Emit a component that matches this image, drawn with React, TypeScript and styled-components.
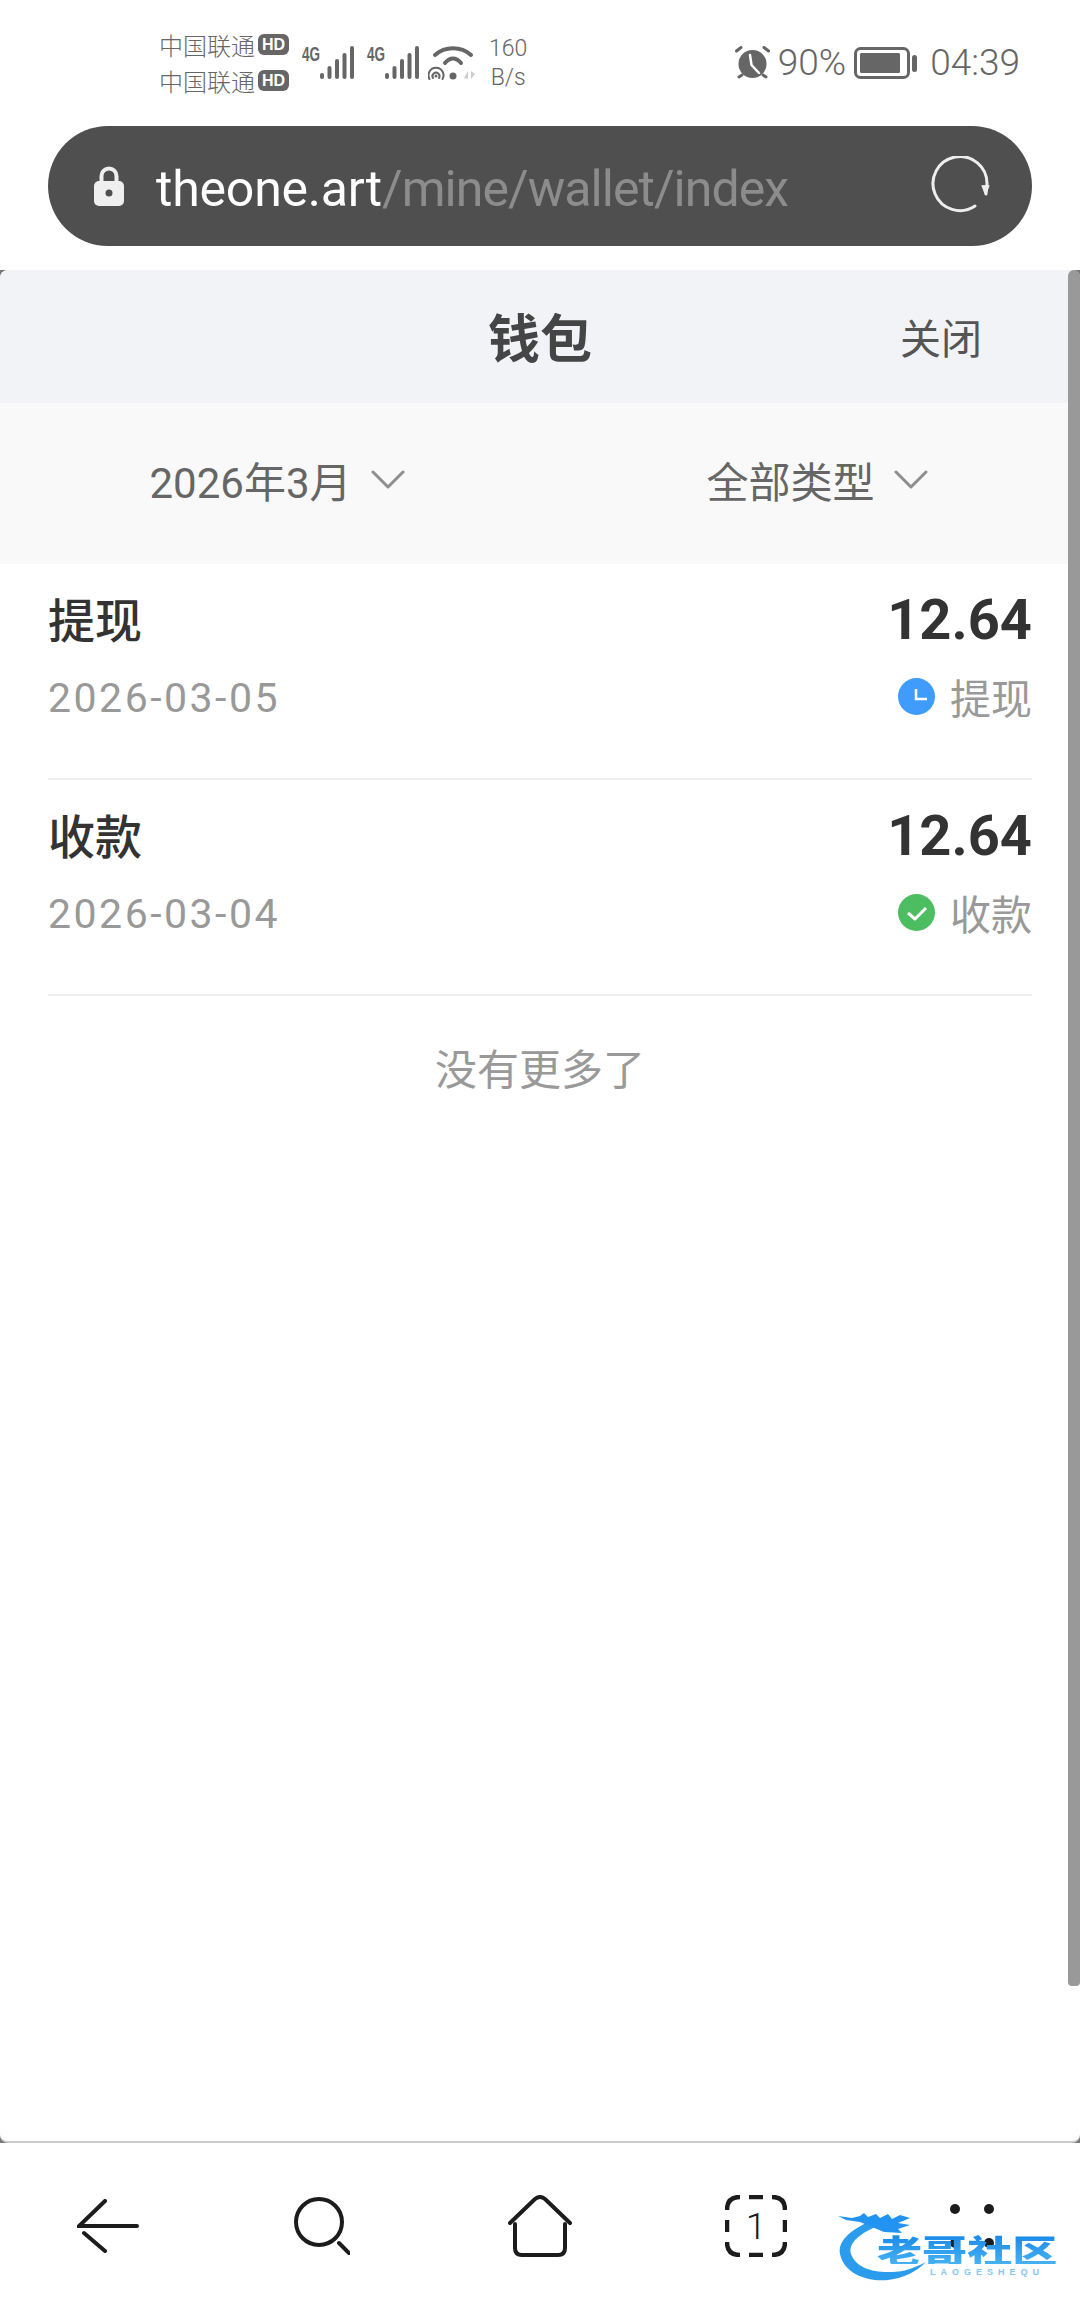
import React from 'react';
import styled, { createGlobalStyle } from 'styled-components';

const GlobalStyle = createGlobalStyle`
  html, body {
    margin: 0;
    padding: 0;
    background: #fff;
  }
  body {
    font-family: Roboto, "Noto Sans CJK SC", sans-serif;
  }
`;

const Page = styled.div`
  position: relative;
  width: 1080px;
  height: 2310px;
  display: flex;
  flex-direction: column;
  overflow: hidden;
  background: #fff;
`;

const StatusBar = styled.div`
  height: 126px;
  box-sizing: border-box;
  padding: 0 60px 1px 159px;
  display: flex;
  align-items: center;
  justify-content: space-between;
  color: #666;
`;

const StatusGroup = styled.div`
  display: flex;
  align-items: center;
`;

const Carriers = styled.div`
  display: flex;
  flex-direction: column;
  gap: 8px;
  margin-right: 13px;
`;

const Carrier = styled.div`
  display: flex;
  align-items: center;
  gap: 3px;
  font-size: 24px;
  line-height: 28px;
  font-family: "Noto Sans CJK SC", sans-serif;
  font-weight: 300;
`;

const HdBadge = styled.span`
  width: 31px;
  height: 21px;
  border-radius: 6px;
  background: #666;
  color: #fff;
  font: 700 16px/21px "Liberation Sans", sans-serif;
  text-align: center;
`;

const SignalGroup = styled.div`
  display: flex;
  gap: 12px;
  margin-right: 8px;
`;

const Speed = styled.div`
  margin-left: 13px;
  font-size: 23px;
  font-weight: 300;
  line-height: 29px;
  text-align: center;
`;

const BatteryText = styled.span`
  font-size: 37px;
  font-weight: 300;
  margin: 0 8px 0 8px;
`;

const ClockText = styled.span`
  font-size: 37px;
  font-weight: 300;
  margin-left: 13px;
`;

const UrlBar = styled.div`
  height: 120px;
  margin: 0 48px;
  box-sizing: border-box;
  padding: 0 42px 0 45px;
  display: flex;
  align-items: center;
  border-radius: 60px / 60px;
  background: #4f4f4f;
`;

const UrlText = styled.div`
  flex: 1;
  margin-left: 31px;
  padding-top: 5px;
  font-size: 50px;
  font-weight: 400;
  letter-spacing: -0.95px;
  color: #8c8c8c;
  white-space: nowrap;
`;

const UrlHost = styled.span`
  color: #fff;
  letter-spacing: -0.2px;
`;

const WebFrame = styled.div`
  margin-top: 24px;
  height: 1873px;
  display: flex;
  flex-direction: column;
  position: relative;
  background: #777;
`;

const WebContent = styled.div`
  flex: 1;
  display: flex;
  flex-direction: column;
  border-radius: 8px;
  overflow: hidden;
  background: #fff;
  border-bottom: 2px solid #ccc;
`;

const Header = styled.div`
  height: 133px;
  flex: none;
  padding-bottom: 2px;
  box-sizing: border-box;
  background: #f2f3f7;
  position: relative;
  display: flex;
  align-items: center;
  justify-content: center;
`;

const Title = styled.div`
  font-family: "Noto Sans CJK SC", sans-serif;
  font-size: 52px;
  font-weight: 700;
  color: #454545;
`;

const CloseLink = styled.div`
  position: absolute;
  right: 98px;
  top: 50%;
  transform: translateY(-52%);
  font-family: "Noto Sans CJK SC", sans-serif;
  font-size: 41px;
  color: #555;
`;

const FilterBar = styled.div`
  height: 161px;
  flex: none;
  background: #f9f9f9;
  display: grid;
  grid-template-columns: 554px 526px;
`;

const Filter = styled.div`
  display: flex;
  align-items: center;
  justify-content: center;
  gap: 19px;
  padding-bottom: 8px;
  font-size: 42px;
  color: #666;
  font-family: Roboto, "Noto Sans CJK SC", sans-serif;
`;

const List = styled.div`
  display: flex;
  flex-direction: column;
  padding: 0 48px;
`;

const Row = styled.div`
  height: 216px;
  box-sizing: border-box;
  border-bottom: 2px solid #eee;
  display: grid;
  grid-template-columns: 1fr auto;
  grid-template-rows: 78px 77px;
  padding-top: 17px;
  align-items: center;
`;

const RowTitle = styled.div`
  margin-bottom: 6px;
  font-family: "Noto Sans CJK SC", sans-serif;
  font-size: 47px;
  color: #333;
  font-weight: 500;
`;

const Amount = styled.div`
  font-family: Roboto, sans-serif;
  font-size: 56px;
  font-weight: 700;
  color: #333;
  text-align: right;
`;

const RowDate = styled.div`
  font-size: 41px;
  color: #999;
  letter-spacing: 2.5px;
`;

const RowStatus = styled.div`
  display: flex;
  align-items: center;
  justify-content: flex-end;
  gap: 15px;
  margin-bottom: 3px;
  font-family: "Noto Sans CJK SC", sans-serif;
  font-size: 41px;
  color: #999;
`;

const NoMore = styled.div`
  margin-top: 43px;
  text-align: center;
  font-family: "Noto Sans CJK SC", sans-serif;
  font-size: 42px;
  line-height: 56px;
  color: #999;
`;

const ScrollThumb = styled.div`
  position: absolute;
  top: 0;
  right: 0;
  width: 12px;
  height: 1716px;
  border-radius: 6px 6px 4px 4px;
  background: #999;
`;

const BottomNav = styled.div`
  flex: 1;
  display: grid;
  grid-template-columns: repeat(5, 1fr);
  align-items: center;
  justify-items: center;
  padding-bottom: 2px;
`;

const SearchSlot = styled.span`
  display: flex;
  margin-right: 4px;
`;

const Watermark = styled.div`
  position: absolute;
  left: 838px;
  top: 2212px;
  width: 224px;
  height: 70px;
`;

const WatermarkTitle = styled.div`
  position: absolute;
  left: 39px;
  top: 22px;
  font-family: "Noto Sans CJK SC", sans-serif;
  font-size: 32px;
  line-height: 30px;
  font-weight: 900;
  white-space: nowrap;
  transform: scaleX(1.41);
  transform-origin: left center;
  background: linear-gradient(#1788e8, #46b2f3);
  -webkit-background-clip: text;
  background-clip: text;
  color: transparent;
`;

const WatermarkSub = styled.div`
  position: absolute;
  left: 92px;
  top: 55px;
  font: 700 9px/10px "Liberation Sans", sans-serif;
  letter-spacing: 5px;
  color: #86c6f0;
  white-space: nowrap;
`;

const Chevron = () => (
  <svg width="34" height="20" viewBox="0 0 34 20" fill="none" stroke="#8e8e8e" strokeWidth="3" strokeLinecap="round" strokeLinejoin="round">
    <path d="M2 2 L17 17 L32 2" />
  </svg>
);

const Signal = () => (
  <svg width="53" height="39" viewBox="0 -3 53 39" fill="#666">
    <text x="0" y="15" fontFamily="'Liberation Sans', sans-serif" fontSize="20" fontWeight="700" textLength="18" lengthAdjust="spacingAndGlyphs">4G</text>
    <rect x="18" y="27" width="4" height="6" rx="2" />
    <rect x="25.5" y="20" width="4" height="13" rx="2" />
    <rect x="33" y="13" width="4" height="20" rx="2" />
    <rect x="40.5" y="7" width="4" height="26" rx="2" />
    <rect x="48" y="0" width="4" height="33" rx="2" />
  </svg>
);

const Wifi = () => (
  <svg width="48" height="34" viewBox="0 0 48 34" fill="none" stroke="#666" strokeLinecap="round">
    <path d="M7 9 C17 0 33 0 43 9" strokeWidth="4" />
    <path d="M17 17 C22 11 28 11 33 17" strokeWidth="4" />
    <path d="M1.5 33 A7.5 7.5 0 1 1 14.5 33" strokeWidth="2" />
    <path d="M5 32 A3.5 3.5 0 1 1 11 32" strokeWidth="2" />
    <circle cx="8" cy="30" r="1.5" fill="#666" stroke="none" />
    <circle cx="25" cy="30" r="3.5" fill="#666" stroke="none" />
    <path d="M40 33 L40 25 L36 32 Z M43 25 L43 33 L47 28 Z" fill="#ccc" stroke="none" />
  </svg>
);

const Alarm = () => (
  <svg width="35" height="33" viewBox="0 0 35 33" fill="none" stroke="#666" strokeLinecap="round">
    <circle cx="17.5" cy="18" r="14" fill="#666" stroke="none" />
    <path d="M1.5 5 L6 1.5 M33.5 5 L29 1.5 M4 31 L7 29 M31 31 L28 29" strokeWidth="3" />
    <path d="M15 9 L16.5 19 L24 27" stroke="#fff" strokeWidth="2.5" />
  </svg>
);

const Battery = () => (
  <svg width="63" height="32" viewBox="0 0 63 32" fill="none">
    <rect x="1.5" y="1.5" width="53" height="29" rx="5" stroke="#666" strokeWidth="3" />
    <rect x="6" y="6" width="40" height="20" rx="1.5" fill="#666" />
    <rect x="58" y="8" width="5" height="17" rx="2.5" fill="#666" />
  </svg>
);

const Lock = () => (
  <svg width="32" height="40" viewBox="0 0 32 40" fill="none">
    <path d="M8.5 17 V10 A7.5 7.5 0 0 1 23.5 10 V17" stroke="#efefef" strokeWidth="4" />
    <rect x="1" y="15" width="30" height="25" rx="5" fill="#efefef" />
    <circle cx="16" cy="27" r="3.5" fill="#4f4f4f" />
  </svg>
);

const Reload = () => (
  <svg width="60" height="60" viewBox="0 0 60 60" fill="none" stroke="#eee" strokeWidth="3" strokeLinecap="round">
    <path d="M45 50 A27 27 0 1 1 57 28 L56 38" />
    <path d="M52 30 L55.5 39 L59 30 Z" fill="#eee" strokeWidth="1" />
  </svg>
);

const ClockBadge = () => (
  <svg width="37" height="37" viewBox="0 0 37 37" fill="none">
    <circle cx="18.5" cy="18.5" r="18.5" fill="#3f9bfc" />
    <path d="M18 11 V21 H29" stroke="#fff" strokeWidth="2.5" />
  </svg>
);

const CheckBadge = () => (
  <svg width="37" height="37" viewBox="0 0 37 37" fill="none">
    <circle cx="18.5" cy="18.5" r="18.5" fill="#4dbd61" />
    <path d="M10 19 L17 25 L28 14" stroke="#fff" strokeWidth="3" strokeLinejoin="round" />
  </svg>
);

const BackIcon = () => (
  <svg width="62" height="54" viewBox="0 0 62 54" fill="none" stroke="#1c1c1c" strokeWidth="4" strokeLinecap="round">
    <path d="M28 2 L2 27 H60" />
    <path d="M7 34 L28 52" />
  </svg>
);

const SearchIcon = () => (
  <svg width="56" height="58" viewBox="0 0 56 58" fill="none" stroke="#1c1c1c" strokeWidth="4" strokeLinecap="round">
    <circle cx="25" cy="25" r="23" />
    <path d="M45 46 L55 56" />
  </svg>
);

const HomeIcon = () => (
  <svg width="64" height="62" viewBox="0 0 64 62" fill="none" stroke="#1c1c1c" strokeWidth="4" strokeLinecap="round" strokeLinejoin="round">
    <path d="M2 28 L27 4 Q32 0 37 4 L62 28" />
    <path d="M7 29 V53 Q7 60 14 60 H50 Q57 60 57 53 V29" />
  </svg>
);

const TabsIcon = () => (
  <svg width="62" height="62" viewBox="0 0 62 62" fill="none" stroke="#1c1c1c" strokeWidth="4.5">
    <path d="M2 15 Q2 2 15 2 M24 2 H38 M47 2 Q60 2 60 15 M60 25 V37 M60 47 Q60 60 47 60 M38 60 H24 M15 60 Q2 60 2 47 M2 37 V25" />
    <text x="31" y="44" textAnchor="middle" fontFamily="Roboto, sans-serif" fontSize="37" fontWeight="300" fill="#1c1c1c" stroke="none">1</text>
  </svg>
);

const MenuIcon = () => (
  <svg width="44" height="44" viewBox="0 0 44 44" fill="#1c1c1c">
    <circle cx="5" cy="5" r="5" />
    <circle cx="39" cy="5" r="5" />
    <circle cx="5" cy="39" r="5" />
    <circle cx="39" cy="39" r="5" />
  </svg>
);

const DragonMark = () => (
  <svg width="100" height="70" viewBox="0 0 100 70" fill="none">
    <path d="M28 11 C10 20 0 30 2 42 C6 62 30 70 50 68 C66 66 78 60 88 50 C76 56 66 60 54 60 C36 61 18 56 13 42 C10 32 20 22 40 14 Z" fill="#2b9cec" />
    <path d="M0 4 L14 6 L22 4 L26 1 L30 5 L38 2 L42 6 L50 2 L54 7 L62 3 L72 6 L60 11 L72 13 L60 17 L64 21 L46 20 L34 15 L22 10 L8 8 Z" fill="#2293f0" />
  </svg>
);

const rows = [
  { title: '提现', date: '2026-03-05', amount: '12.64', icon: <ClockBadge /> },
  { title: '收款', date: '2026-03-04', amount: '12.64', icon: <CheckBadge /> },
];

export default function App() {
  return (
    <Page>
      <GlobalStyle />
      <StatusBar>
        <StatusGroup>
          <Carriers>
            <Carrier>中国联通<HdBadge>HD</HdBadge></Carrier>
            <Carrier>中国联通<HdBadge>HD</HdBadge></Carrier>
          </Carriers>
          <SignalGroup>
            <Signal />
            <Signal />
          </SignalGroup>
          <Wifi />
          <Speed>160<br />B/s</Speed>
        </StatusGroup>
        <StatusGroup>
          <Alarm />
          <BatteryText>90%</BatteryText>
          <Battery />
          <ClockText>04:39</ClockText>
        </StatusGroup>
      </StatusBar>

      <UrlBar>
        <Lock />
        <UrlText><UrlHost>theone.art</UrlHost>/mine/wallet/index</UrlText>
        <Reload />
      </UrlBar>

      <WebFrame>
        <WebContent>
          <Header>
            <Title>钱包</Title>
            <CloseLink>关闭</CloseLink>
          </Header>
          <FilterBar>
            <Filter>2026年3月<Chevron /></Filter>
            <Filter>全部类型<Chevron /></Filter>
          </FilterBar>
          <List>
            {rows.map((row) => (
              <Row key={row.date}>
                <RowTitle>{row.title}</RowTitle>
                <Amount>{row.amount}</Amount>
                <RowDate>{row.date}</RowDate>
                <RowStatus>{row.icon}{row.title}</RowStatus>
              </Row>
            ))}
          </List>
          <NoMore>没有更多了</NoMore>
        </WebContent>
        <ScrollThumb />
      </WebFrame>

      <BottomNav>
        <BackIcon />
        <SearchSlot><SearchIcon /></SearchSlot>
        <HomeIcon />
        <TabsIcon />
        <MenuIcon />
      </BottomNav>

      <Watermark>
        <DragonMark />
        <WatermarkTitle>老哥社区</WatermarkTitle>
        <WatermarkSub>LAOGESHEQU</WatermarkSub>
      </Watermark>
    </Page>
  );
}
